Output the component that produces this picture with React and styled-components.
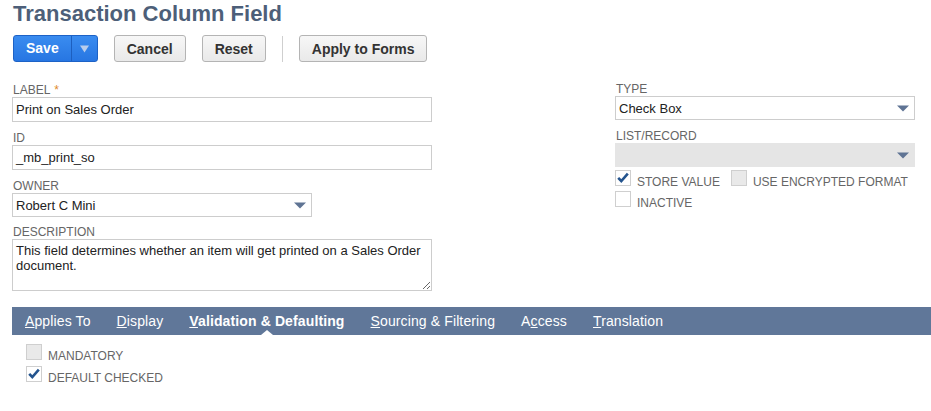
import React from 'react'
import styled, {createGlobalStyle} from 'styled-components'

const GlobalStyle = createGlobalStyle`
    body {
        margin: 0;
        background: #fff;
        font-family: "Liberation Sans", Arial, sans-serif;
    }
`

const Page = styled.div`
    padding-left: 12px;
    width: 919px;
`

const Title = styled.h1`
    margin: 0 0 0 1px;
    font-size: 22px;
    line-height: 28px;
    font-weight: bold;
    color: #4d5f79;
`

const Toolbar = styled.div`
    display: flex;
    align-items: center;
    margin: 7px 0 0 1px;
    gap: 16px;
`

const SplitButton = styled.div`
    display: flex;
    height: 27px;
    box-sizing: border-box;
    border: 1px solid #1d62c6;
    border-radius: 3px;
    background: linear-gradient(#3a8cf0, #2776e2);
    overflow: hidden;
`

const SplitMain = styled.span`
    padding: 0 12px;
    color: #fff;
    font-size: 14px;
    font-weight: bold;
    line-height: 25px;
    border-right: 1px solid #1d5fbf;
`

const SplitArrow = styled.span`
    width: 25px;
    display: flex;
    align-items: center;
    justify-content: center;
`

const Button = styled.button`
    height: 27px;
    box-sizing: border-box;
    padding: 0 12px;
    border: 1px solid #b4b4b4;
    border-radius: 3px;
    background: linear-gradient(#f7f7f7, #e9e9e9);
    color: #333;
    font-family: inherit;
    font-size: 14px;
    font-weight: bold;
`

const Divider = styled.span`
    width: 1px;
    height: 26px;
    background: #cfcfcf;
`

const Form = styled.div`
    display: flex;
    margin-top: 22px;
`

const Column = styled.div`
    display: flex;
    flex-direction: column;
    width: ${p => p.width}px;
    margin-left: ${p => p.offset || 0}px;
    margin-top: ${p => p.shift || 0}px;
`

const Field = styled.div`
    margin-bottom: ${p => (p.gap === undefined ? 10 : p.gap)}px;
`

const Label = styled.div`
    margin-left: 1px;
    height: 13px;
    font-size: 12px;
    line-height: 13px;
    color: #666;
    text-transform: uppercase;
`

const Star = styled.span`
    color: #e08a2c;
    margin-left: 4px;
`

const Input = styled.div`
    width: ${p => p.width || 420}px;
    height: 25px;
    box-sizing: border-box;
    border: 1px solid #cdcdcd;
    padding: 0 3px;
    font-size: 13px;
    line-height: 23px;
    color: #222;
`

const Select = styled.div`
    width: ${p => p.width}px;
    height: 24px;
    box-sizing: border-box;
    display: flex;
    align-items: center;
    justify-content: space-between;
    padding: 0 5px 0 3px;
    border: 1px solid ${p => (p.disabled ? '#e5e5e5' : '#cdcdcd')};
    background: ${p => (p.disabled ? '#e5e5e5' : '#fff')};
    font-size: 13px;
    color: #222;
`

const TextArea = styled.textarea`
    display: block;
    width: 420px;
    height: 52px;
    box-sizing: border-box;
    margin: 0;
    border: 1px solid #cdcdcd;
    border-radius: 0;
    padding: 3px 3px;
    font-family: inherit;
    font-size: 13px;
    line-height: 15px;
    color: #222;
    outline: none;
`

const CheckRow = styled.div`
    display: flex;
    align-items: flex-end;
    height: 16px;
    margin-top: ${p => p.top || 0}px;
`

const Box = styled.span`
    width: 16px;
    height: 16px;
    box-sizing: border-box;
    border: 1px solid #cfcfcf;
    background: ${p => (p.disabled ? '#e9e9e9' : '#fff')};
    flex-shrink: 0;
    position: relative;
`

const CheckText = styled.span`
    margin: 0 11px -3px 6px;
    font-size: 12px;
    line-height: 13px;
    color: #666;
    text-transform: uppercase;
    white-space: nowrap;
`

const TabBar = styled.div`
    display: flex;
    height: 28px;
    margin-top: 16px;
    background: #607799;
`

const Tab = styled.span`
    position: relative;
    padding: 0 13px;
    color: #fff;
    font-size: 14px;
    line-height: 28px;
    letter-spacing: 0.12px;
    font-weight: ${p => (p.active ? 'bold' : 'normal')};

    u {
        text-decoration: underline;
    }

    ${p => p.active && `
        &::after {
            content: '';
            position: absolute;
            left: 50%;
            bottom: 0;
            margin-left: -6px;
            border-left: 6px solid transparent;
            border-right: 6px solid transparent;
            border-bottom: 5px solid #fff;
        }
    `}
`

const TabPanel = styled.div`
    padding: 9px 0 0 14px;
`

const Caret = ({color = '#5f7494'}) => (
    <svg width="12" height="7" viewBox="0 0 12 7">
        <path d="M0 0.5 H12 L6 6.5 Z" fill={color} />
    </svg>
)

const Checkbox = ({checked, disabled, label}) => (
    <>
        <Box disabled={disabled}>
            {checked && (
                <svg width="16" height="16" viewBox="0 0 16 16" style={{position: 'absolute', left: -1, top: -1}}>
                    <path d="M3.2 7.8 L6.3 11 L12.8 3.6" fill="none" stroke="#24548e" strokeWidth="2.6" />
                </svg>
            )}
        </Box>
        <CheckText>{label}</CheckText>
    </>
)

export default function App() {
    return (
        <Page>
            <GlobalStyle />
            <Title>Transaction Column Field</Title>
            <Toolbar>
                <SplitButton>
                    <SplitMain>Save</SplitMain>
                    <SplitArrow>
                        <svg width="9" height="8" viewBox="0 0 9 8">
                            <path d="M0 0.5 H9 L4.5 7.5 Z" fill="#b9cdec" />
                        </svg>
                    </SplitArrow>
                </SplitButton>
                <Button>Cancel</Button>
                <Button>Reset</Button>
                <Divider />
                <Button>Apply to Forms</Button>
            </Toolbar>

            <Form>
                <Column width={420}>
                    <Field>
                        <Label>Label<Star>*</Star></Label>
                        <Input>Print on Sales Order</Input>
                    </Field>
                    <Field>
                        <Label>ID</Label>
                        <Input>_mb_print_so</Input>
                    </Field>
                    <Field gap={9}>
                        <Label>Owner</Label>
                        <Select width={300}>
                            <span>Robert C Mini</span>
                            <Caret />
                        </Select>
                    </Field>
                    <Field gap={0}>
                        <Label>Description</Label>
                        <TextArea
                            defaultValue="This field determines whether an item will get printed on a Sales Order document."
                        />
                    </Field>
                </Column>

                <Column width={300} offset={183} shift={-1}>
                    <Field>
                        <Label>Type</Label>
                        <Select width={300}>
                            <span>Check Box</span>
                            <Caret />
                        </Select>
                    </Field>
                    <Field gap={3}>
                        <Label>List/Record</Label>
                        <Select width={300} disabled>
                            <span />
                            <Caret />
                        </Select>
                    </Field>
                    <CheckRow>
                        <Checkbox checked label="Store Value" />
                        <Checkbox disabled label="Use Encrypted Format" />
                    </CheckRow>
                    <CheckRow top={5}>
                        <Checkbox label="Inactive" />
                    </CheckRow>
                </Column>
            </Form>

            <TabBar>
                <Tab><u>A</u>pplies To</Tab>
                <Tab><u>D</u>isplay</Tab>
                <Tab active><u>V</u>alidation &amp; Defaulting</Tab>
                <Tab><u>S</u>ourcing &amp; Filtering</Tab>
                <Tab>A<u>c</u>cess</Tab>
                <Tab><u>T</u>ranslation</Tab>
            </TabBar>
            <TabPanel>
                <CheckRow>
                    <Checkbox disabled label="Mandatory" />
                </CheckRow>
                <CheckRow top={6}>
                    <Checkbox checked label="Default Checked" />
                </CheckRow>
            </TabPanel>
        </Page>
    )
}
